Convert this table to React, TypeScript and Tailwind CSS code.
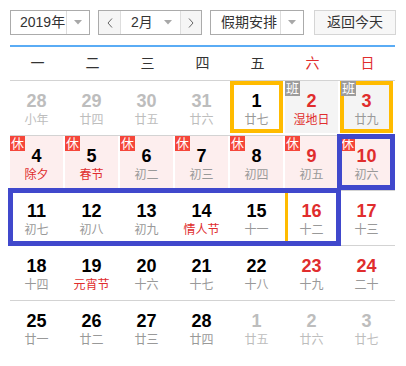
import React from 'react';

type Day = {
  n: number;
  lunar: string;
  other?: boolean; // prev / next month
  redNum?: boolean;
  redLunar?: boolean;
  tag?: '休' | '班';
  today?: boolean;
  edge?: boolean; // yellow edge peeking out under the week outline
};

const rows: Day[][] = [
  [
    { n: 28, lunar: '小年', other: true },
    { n: 29, lunar: '廿四', other: true },
    { n: 30, lunar: '廿五', other: true },
    { n: 31, lunar: '廿六', other: true },
    { n: 1, lunar: '廿七', today: true },
    { n: 2, lunar: '湿地日', redNum: true, redLunar: true, tag: '班' },
    { n: 3, lunar: '廿九', redNum: true, tag: '班', today: true },
  ],
  [
    { n: 4, lunar: '除夕', redLunar: true, tag: '休' },
    { n: 5, lunar: '春节', redLunar: true, tag: '休' },
    { n: 6, lunar: '初二', tag: '休' },
    { n: 7, lunar: '初三', tag: '休' },
    { n: 8, lunar: '初四', tag: '休' },
    { n: 9, lunar: '初五', redNum: true, tag: '休' },
    { n: 10, lunar: '初六', redNum: true, tag: '休' },
  ],
  [
    { n: 11, lunar: '初七' },
    { n: 12, lunar: '初八' },
    { n: 13, lunar: '初九' },
    { n: 14, lunar: '情人节', redLunar: true },
    { n: 15, lunar: '十一' },
    { n: 16, lunar: '十二', redNum: true, edge: true },
    { n: 17, lunar: '十三', redNum: true },
  ],
  [
    { n: 18, lunar: '十四' },
    { n: 19, lunar: '元宵节', redLunar: true },
    { n: 20, lunar: '十六' },
    { n: 21, lunar: '十七' },
    { n: 22, lunar: '十八' },
    { n: 23, lunar: '十九', redNum: true },
    { n: 24, lunar: '二十', redNum: true },
  ],
  [
    { n: 25, lunar: '廿一' },
    { n: 26, lunar: '廿二' },
    { n: 27, lunar: '廿三' },
    { n: 28, lunar: '廿四' },
    { n: 1, lunar: '廿五', other: true },
    { n: 2, lunar: '廿六', other: true },
    { n: 3, lunar: '廿七', other: true },
  ],
];

const weekdays = ['一', '二', '三', '四', '五', '六', '日'];

function Caret() {
  return (
    <svg width="8" height="5" viewBox="0 0 8 5" aria-hidden>
      <path d="M0 0h8L4 4.5z" fill="#a8a8a8" />
    </svg>
  );
}

function Chevron({ dir }: { dir: 'l' | 'r' }) {
  return (
    <svg width="6" height="10" viewBox="0 0 6 10" aria-hidden>
      <path
        d={dir === 'l' ? 'M5 0.5L1 5l4 4.5' : 'M1 0.5L5 5l-4 4.5'}
        fill="none"
        stroke="#666"
        strokeWidth="1"
      />
    </svg>
  );
}

function Cell({ d }: { d: Day }) {
  const bg = d.tag === '休' ? 'bg-[#fdeeee]' : d.tag === '班' ? 'bg-[#f4f4f4]' : 'bg-white';
  const numColor = d.other ? 'text-[#bdbdbd]' : d.redNum ? 'text-[#e02d2d]' : 'text-black';
  const lunarColor = d.other ? 'text-[#bdbdbd]' : d.redLunar ? 'text-[#e02d2d]' : 'text-[#999]';
  return (
    <div className="h-[54px] w-[55px] pr-[2px] pb-[2px]">
      <div
        className={`relative flex h-[52px] w-[53px] flex-col items-center ${bg} ${
          d.today ? 'border-4 border-[#ffbb00] pt-[6px]' : 'pt-[10px]'
        }`}
      >
        {d.tag && (
          <span
            className={`absolute flex h-[15px] w-[15px] items-center justify-center text-[13px] leading-none text-white ${
              d.tag === '休' ? 'bg-[#f5463a]' : 'bg-[#9c9c9c]'
            } ${d.today ? 'left-[-3px] top-[-4px]' : 'left-0 top-0'}`}
          >
            {d.tag}
          </span>
        )}
        {d.edge && <span className="absolute bottom-0 left-0 top-0 w-[3px] bg-[#ffbb00]" />}
        <span className={`h-[20px] text-[18px] font-bold leading-[20px] ${numColor}`}>{d.n}</span>
        <span className={`mt-[1px] text-[12px] leading-[16px] ${lunarColor}`}>{d.lunar}</span>
      </div>
    </div>
  );
}

export default function App() {
  return (
    <div
      className="h-[366px] w-[406px] bg-white px-[10px] pt-[10px] text-[14px] text-[#333]"
      style={{ fontFamily: '"Liberation Sans", "Noto Sans CJK SC", sans-serif' }}
    >
      {/* toolbar */}
      <div className="flex h-[25px]">
        <div className="flex w-[80px] border border-[#ababab]">
          <span className="flex w-[55px] items-center pl-[9px]">2019年</span>
          <span className="flex flex-1 items-center justify-center border-l border-[#ddd]">
            <Caret />
          </span>
        </div>
        <div className="ml-[8px] flex w-[104px] border border-[#ababab]">
          <span className="flex w-[22px] items-center justify-center border-r border-[#ddd] bg-[#f5f5f5]">
            <Chevron dir="l" />
          </span>
          <span className="flex flex-1 items-center pl-[10px]">
            2月
            <span className="ml-auto mr-[8px] flex">
              <Caret />
            </span>
          </span>
          <span className="flex w-[21px] items-center justify-center border-l border-[#ddd] bg-[#f5f5f5]">
            <Chevron dir="r" />
          </span>
        </div>
        <div className="ml-[8px] flex w-[94px] border border-[#ababab]">
          <span className="flex w-[69px] items-center pl-[10px]">假期安排</span>
          <span className="flex flex-1 items-center justify-center border-l border-[#ddd]">
            <Caret />
          </span>
        </div>
        <div className="ml-[10px] flex w-[82px] items-center justify-center border border-[#d5d5d5] bg-[#f7f7f7]">
          返回今天
        </div>
      </div>

      <div className="mt-[10px] h-[2px] w-[385px] bg-[#5aacf5]" />

      {/* weekday header */}
      <div className="grid h-[34px] w-[385px] grid-cols-7 border-b border-[#d3d3d3]">
        {weekdays.map((w, i) => (
          <div
            key={w}
            className={`flex items-center justify-center ${i >= 5 ? 'text-[#e02d2d]' : 'text-[#333]'}`}
          >
            {w}
          </div>
        ))}
      </div>

      {/* day grid */}
      <div className="relative w-[385px]">
        {rows.map((r, ri) => (
          <div
            key={ri}
            className={`grid grid-cols-7 ${ri < rows.length - 1 ? 'border-b border-[#d3d3d3]' : ''}`}
          >
            {r.map((d, ci) => (
              <Cell key={ci} d={d} />
            ))}
          </div>
        ))}
        {/* selected week outline */}
        <div className="absolute left-[327px] top-[53px] h-[56px] w-[58px] border-[5px] border-[#4048cc]" />
        <div className="absolute -left-[2px] top-[107px] h-[58px] w-[333px] border-[5px] border-[#4048cc]" />
      </div>
    </div>
  );
}
